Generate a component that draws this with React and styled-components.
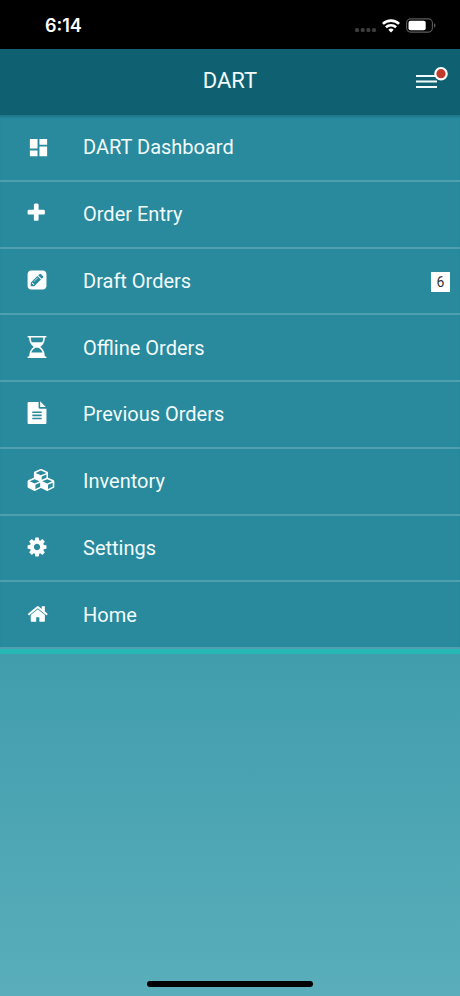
import React from 'react';
import styled, { createGlobalStyle } from 'styled-components';
import { MdDashboard } from 'react-icons/md';

const GlobalStyle = createGlobalStyle`
  *, *::before, *::after { box-sizing: border-box; }
  body {
    margin: 0;
    font-family: Roboto, "Liberation Sans", sans-serif;
    color: #f2fbfc;
  }
`;

const Screen = styled.div`
  min-height: 100vh;
  display: flex;
  flex-direction: column;
  background: linear-gradient(#2b8a9c 0, #419dac 660px, #5aaebb 100%);
`;

const StatusBar = styled.div`
  display: flex;
  align-items: center;
  justify-content: space-between;
  height: 49px;
  padding: 2px 24px 0 45px;
  background: #000;
`;

const Clock = styled.time`
  font: 600 18px/24px Inter, sans-serif;
  color: #fff;
`;

const StatusIcons = styled.div`
  display: flex;
  align-items: center;
  gap: 6px;

  svg { display: block; }
`;

const Header = styled.header`
  display: grid;
  grid-template-columns: 1fr auto 1fr;
  align-items: center;
  height: 66px;
  padding: 0 12px 2px;
  background: #0f6171;
`;

const Title = styled.h1`
  grid-column: 2;
  margin: 0;
  font-size: 22px;
  line-height: 28px;
  font-weight: 400;
`;

const MenuButton = styled.button`
  justify-self: end;
  display: block;
  padding: 0 0 4px;
  border: 0;
  background: none;
  cursor: pointer;

  svg { display: block; }
`;

const Menu = styled.ul`
  display: grid;
  grid-auto-rows: 1fr;
  min-height: 539px;
  margin: 0;
  padding: 0;
  list-style: none;
  background: #288a9c;
  border-bottom: 5px solid #25b8b5;
  box-shadow: inset 0 3px 2px -1px #1d7789;
`;

const MenuItem = styled.li`
  display: grid;
  border-bottom: 2px solid #4ea0b1;
`;

const MenuLink = styled.a`
  display: flex;
  align-items: center;
  padding: 0 10px 0 27px;
  color: inherit;
  text-decoration: none;
`;

const IconSlot = styled.span`
  flex: 0 0 56px;
  display: flex;
  padding-bottom: ${({ $raised }) => ($raised ? '2px' : '0')};
  color: #fff;

  svg { display: block; }
`;

const Label = styled.span`
  flex: 1;
  font-size: 20px;
  line-height: 24px;
`;

const Badge = styled.span`
  min-width: 19px;
  padding: 0 4px;
  margin-top: 2px;
  background: #fff;
  color: #333;
  font-size: 14px;
  line-height: 20px;
  text-align: center;
`;

const HomeBar = styled.div`
  width: 36%;
  height: 6px;
  margin: auto auto 9px;
  border-radius: 3px;
  background: #000;
`;

const glyphs = {
  plus: {
    width: 1408,
    shift: 192,
    d: 'M1600 736v192q0 40-28 68t-68 28h-416v416q0 40-28 68t-68 28h-192q-40 0-68-28t-28-68v-416h-416q-40 0-68-28t-28-68v-192q0-40 28-68t68-28h416v-416q0-40 28-68t68-28h192q40 0 68 28t28 68v416h416q40 0 68 28t28 68z',
  },
  pencil: {
    width: 1536,
    shift: 0,
    d: 'M404 1108l152 152-52 52h-56v-96h-96v-56zm414-390q14 13-3 30l-291 291q-17 17-30 3-14-13 3-30l291-291q17-17 30-3zm-274 690l544-544-288-288-544 544v288h288zm608-608l92-92q28-28 28-68t-28-68l-152-152q-28-28-68-28t-68 28l-92 92zm384-384v960q0 119-84.5 203.500t-203.500 84.500h-960q-119 0-203.500-84.500t-84.500-203.500v-960q0-119 84.500-203.500t203.500-84.500h960q119 0 203.500 84.500t84.500 203.500z',
  },
  hourglass: {
    width: 1536,
    shift: 0,
    d: 'M1408 128q0 261-106.500 461.500t-266.500 306.500q160 106 266.500 306.500t106.500 461.500h96q14 0 23 9t9 23v64q0 14-9 23t-23 9h-1472q-14 0-23-9t-9-23v-64q0-14 9-23t23-9h96q0-261 106.500-461.500t266.500-306.500q-160-106-266.500-306.500t-106.500-461.500h-96q-14 0-23-9t-9-23v-64q0-14 9-23t23-9h1472q14 0 23 9t9 23v64q0 14-9 23t-23 9h-96zM256 128q0 206 85 384h854q85-178 85-384h-1024zm962 1216q-54-141-145.500-241.500t-194.500-142.500h-230q-103 42-194.500 142.500t-145.500 241.500h910z',
  },
  file: {
    width: 1536,
    shift: 128,
    d: 'M1596 380q14 14 28 36h-472v-472q22 14 36 28zm-476 164h544v1152q0 40-28 68t-68 28h-1344q-40 0-68-28t-28-68v-1600q0-40 28-68t68-28h800v448q0 40 28 68t68 28zm160 832v-64q0-14-9-23t-23-9h-704q-14 0-23 9t-9 23v64q0 14 9 23t23 9h704q14 0 23-9t9-23zm0-256v-64q0-14-9-23t-23-9h-704q-14 0-23 9t-9 23v64q0 14 9 23t23 9h704q14 0 23-9t9-23zm0-256v-64q0-14-9-23t-23-9h-704q-14 0-23 9t-9 23v64q0 14 9 23t23 9h704q14 0 23-9t9-23z',
  },
  cubes: {
    width: 2304,
    shift: 0,
    d: 'M640 1632l384-192v-314l-384 164v342zm-64-454l404-173-404-173-404 173zm1088 454l384-192v-314l-384 164v342zm-64-454l404-173-404-173-404 173zm-448-293l384-165v-266l-384 164v267zm-64-379l441-189-441-189-441 189zm1088 518v416q0 36-19 67t-52 47l-448 224q-25 14-57 14t-57-14l-448-224q-4-2-7-4-2 2-7 4l-448 224q-25 14-57 14t-57-14l-448-224q-33-16-52-47t-19-67v-416q0-38 21.500-70t56.500-48l434-186v-400q0-38 21.500-70t56.500-48l448-192q23-10 50-10t50 10l448 192q35 16 56.500 48t21.500 70v400l434 186q36 16 57 48t21 70z',
  },
  cog: {
    width: 1536,
    shift: 128,
    d: 'M1152 896q0-106-75-181t-181-75-181 75-75 181 75 181 181 75 181-75 75-181zm512-109v222q0 12-8 23t-20 13l-185 28q-19 54-39 91 35 50 107 138 10 12 10 25t-9 23q-27 37-99 108t-94 71q-12 0-26-9l-138-108q-44 23-91 38-16 136-29 186-7 28-36 28h-222q-14 0-24.500-8.500t-11.500-21.500l-28-184q-49-16-90-37l-141 107q-10 9-25 9-14 0-25-11-126-114-165-168-7-10-7-23 0-12 8-23 15-21 51-66.500t54-70.500q-27-50-41-99l-183-27q-13-2-21-12.500t-8-23.500v-222q0-12 8-23t19-13l186-28q14-46 39-92-40-57-107-138-10-12-10-24 0-10 9-23 26-36 98.500-107.500t94.500-71.500q13 0 26 10l138 107q44-23 91-38 16-136 29-186 7-28 36-28h222q14 0 24.500 8.500t11.500 21.500l28 184q49 16 90 37l142-107q9-9 24-9 13 0 25 10 129 119 165 170 7 8 7 22 0 12-8 23-15 21-51 66.500t-54 70.500q26 50 41 98l183 28q13 2 21 12.500t8 23.500z',
  },
  home: {
    width: 1664,
    shift: 64,
    d: 'M1472 992v480q0 26-19 45t-45 19h-384v-384h-256v384h-384q-26 0-45-19t-19-45v-480q0-1 .5-3t.5-3l575-474 575 474q1 2 1 6zm223-69l-62 74q-8 9-21 11h-3q-13 0-21-7l-692-577-692 577q-12 8-24 7-13-2-21-11l-62-74q-8-10-7-23.500t11-21.500l719-599q32-26 76-26t76 26l244 204v-195q0-14 9-23t23-9h192q14 0 23 9t9 23v408l219 182q10 8 11 21.500t-7 23.500z',
  },
};

// The view box starts slightly left of each glyph to give it a small side bearing.
function Glyph({ name }) {
  const { width, shift, d } = glyphs[name];
  return (
    <svg
      height="22"
      viewBox={`${shift - 48} 0 ${width + 48} 1792`}
      overflow="visible"
      fill="currentColor"
      fillRule="evenodd"
      aria-hidden="true"
    >
      <path d={d} />
    </svg>
  );
}

const items = [
  { label: 'DART Dashboard' },
  { label: 'Order Entry', icon: 'plus' },
  { label: 'Draft Orders', icon: 'pencil', count: 6 },
  { label: 'Offline Orders', icon: 'hourglass' },
  { label: 'Previous Orders', icon: 'file' },
  { label: 'Inventory', icon: 'cubes' },
  { label: 'Settings', icon: 'cog' },
  { label: 'Home', icon: 'home' },
];

export default function App() {
  return (
    <Screen>
      <GlobalStyle />
      <StatusBar>
        <Clock>6:14</Clock>
        <StatusIcons>
          <svg width="21" height="16" viewBox="0 0 21 16" fill="#3c3c3e" aria-hidden="true">
            <rect x="0" y="10" width="4" height="4" rx="1.500" />
            <rect x="5.700" y="10" width="4" height="4" rx="1.500" />
            <rect x="11.400" y="10" width="4" height="4" rx="1.500" />
            <rect x="17" y="10" width="4" height="4" rx="1.500" />
          </svg>
          <svg width="18" height="14" viewBox="0 0 18 14" fill="none" stroke="#fff" strokeWidth="2.600" aria-hidden="true">
            <path d="M0.900 4.900a11.600 11.600 0 0 1 16.200 0" />
            <path d="M3.900 8.300a7.300 7.300 0 0 1 10.200 0" />
            <path d="M9 13.500l-2.700-2.700a3.800 3.800 0 0 1 5.400 0z" fill="#fff" stroke="none" />
          </svg>
          <svg width="30" height="15" viewBox="0 0 30 15" aria-hidden="true">
            <rect x="0.600" y="0.900" width="25.800" height="13.200" rx="4" fill="none" stroke="#5c5c5f" strokeWidth="1.100" />
            <rect x="2.500" y="2.800" width="17.200" height="9.400" rx="2" fill="#fff" />
            <path d="M28 5.300v4.400q1.500-.6 1.500-2.200t-1.500-2.200z" fill="#5c5c5f" />
          </svg>
        </StatusIcons>
      </StatusBar>
      <Header>
        <Title>DART</Title>
        <MenuButton type="button" aria-label="Menu">
          <svg width="32" height="30" viewBox="0 0 32 30" aria-hidden="true">
            <path d="M0 12h21M0 17.500h21M0 23h21" stroke="#f2fbfc" strokeWidth="2.200" />
            <circle cx="25" cy="9.700" r="5.700" fill="#c0392b" stroke="#fff" strokeWidth="2.200" />
          </svg>
        </MenuButton>
      </Header>
      <nav>
        <Menu>
          {items.map(({ label, icon, count }) => (
            <MenuItem key={label}>
              <MenuLink href="#">
                <IconSlot $raised={Boolean(icon)}>
                  {icon ? <Glyph name={icon} /> : <MdDashboard size={23} aria-hidden="true" />}
                </IconSlot>
                <Label>{label}</Label>
                {count && <Badge>{count}</Badge>}
              </MenuLink>
            </MenuItem>
          ))}
        </Menu>
      </nav>
      <HomeBar />
    </Screen>
  );
}
